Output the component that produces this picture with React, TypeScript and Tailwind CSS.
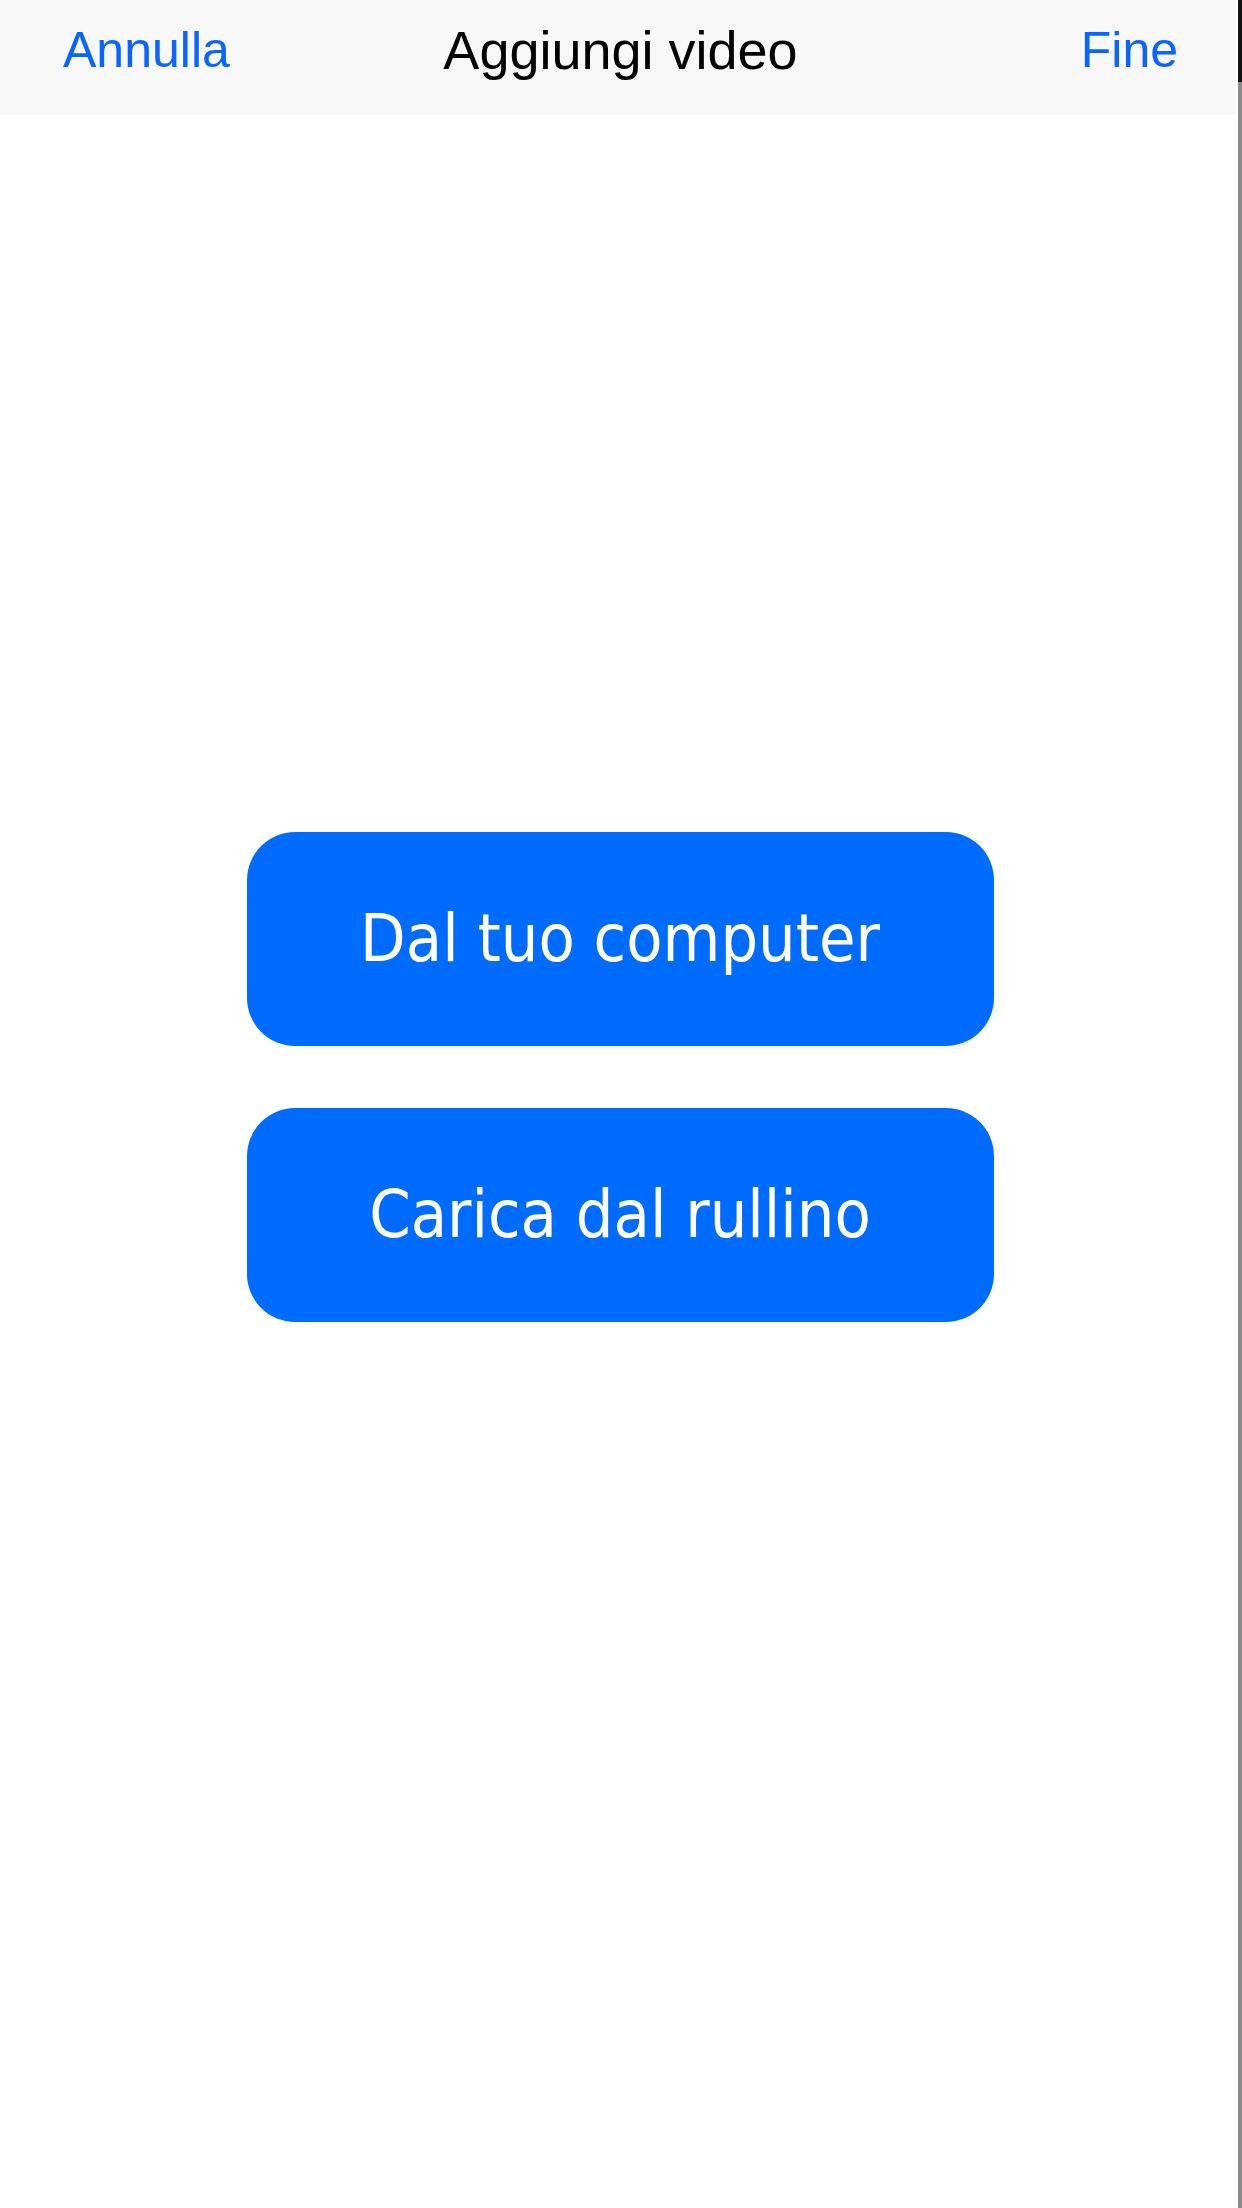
export default function App() {
  return (
    <div className="flex flex-row w-[1242px] h-[2208px] bg-white overflow-hidden">
      <div className="flex flex-col w-[1236px]">
        <div
          className="flex flex-row items-start h-[115px] bg-[#f8f8f8] pt-[25px] pl-[63px] pr-[58px] text-[50px] leading-none"
          style={{ fontFamily: '"Liberation Sans", Arial, sans-serif' }}
        >
          <div className="flex-1 flex justify-start">
            <span className="text-[#0a64ff]">Annulla</span>
          </div>
          <span className="text-black text-[54px] -mt-[2px]">Aggiungi video</span>
          <div className="flex-1 flex justify-end">
            <span className="text-[#0a64ff]">Fine</span>
          </div>
        </div>
        <div className="flex flex-col items-center pt-[717px] gap-[62px] pl-[4px]">
          {["Dal tuo computer", "Carica dal rullino"].map((label) => (
            <button
              key={label}
              className="w-[747px] h-[214px] rounded-[48px] bg-[#006bff] text-white text-[66px] leading-none flex items-center justify-center"
              style={{ fontFamily: '"DejaVu Sans Condensed", "DejaVu Sans", Verdana, sans-serif', fontStretch: "condensed" }}
            >
              {label}
            </button>
          ))}
        </div>
      </div>
      <div className="w-[2px]" />
      <div className="flex flex-col w-[4px]">
        <div className="h-[82px] bg-[#111]" />
        <div className="flex-1 bg-[#8a8a8a]" />
      </div>
    </div>
  );
}
